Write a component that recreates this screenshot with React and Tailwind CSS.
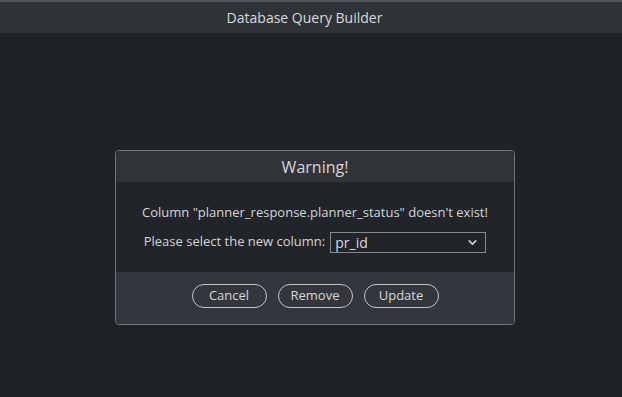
import { ChevronDown } from 'lucide-react';

export default function App() {
  return (
    <div className="w-[622px] h-[397px] bg-[#1f2226] flex flex-col font-['Open_Sans',sans-serif] text-[#d4d6d8]">
      <div className="h-[33px] bg-[#2f3337] border-t-2 border-[#50555b] flex items-center justify-center pr-[13px] text-[14px] text-[#d8dadc]">
        Database Query Builder
      </div>

      <div className="flex-1 flex justify-center pt-[117px] pl-[8px]">
        <div className="w-[400px] h-[175px] rounded-[4px] border border-[#6f747a] overflow-hidden flex flex-col">
          <div className="h-[31px] bg-[#303438] flex items-center justify-center text-[16px] text-[#d4d6d8]">
            Warning!
          </div>
          <div className="h-[90px] bg-[#212428] flex flex-col items-center pt-[21px] text-[13px] gap-[9px]">
            <div>Column "planner_response.planner_status" doesn't exist!</div>
            <div className="flex items-center gap-[5px]">
              <span>Please select the new column:</span>
              <div className="w-[156px] h-[21px] border border-[#85898e] flex items-center justify-between pl-[4px] pr-[6px] bg-[#212428]">
                <span className="text-[14px] text-[#dadcde]">pr_id</span>
                <ChevronDown size={13} strokeWidth={3} className="text-[#d0d2d4]" />
              </div>
            </div>
          </div>
          <div className="flex-1 bg-[#33373d] flex items-start justify-center pt-[12px] gap-[11px] text-[13px]">
            <button className="w-[75px] h-[24px] rounded-full border border-[#c4c6c8] text-[#d6d8da]">Cancel</button>
            <button className="w-[75px] h-[24px] rounded-full border border-[#c4c6c8] text-[#d6d8da]">Remove</button>
            <button className="w-[75px] h-[24px] rounded-full border border-[#c4c6c8] text-[#d6d8da]">Update</button>
          </div>
        </div>
      </div>
    </div>
  );
}
